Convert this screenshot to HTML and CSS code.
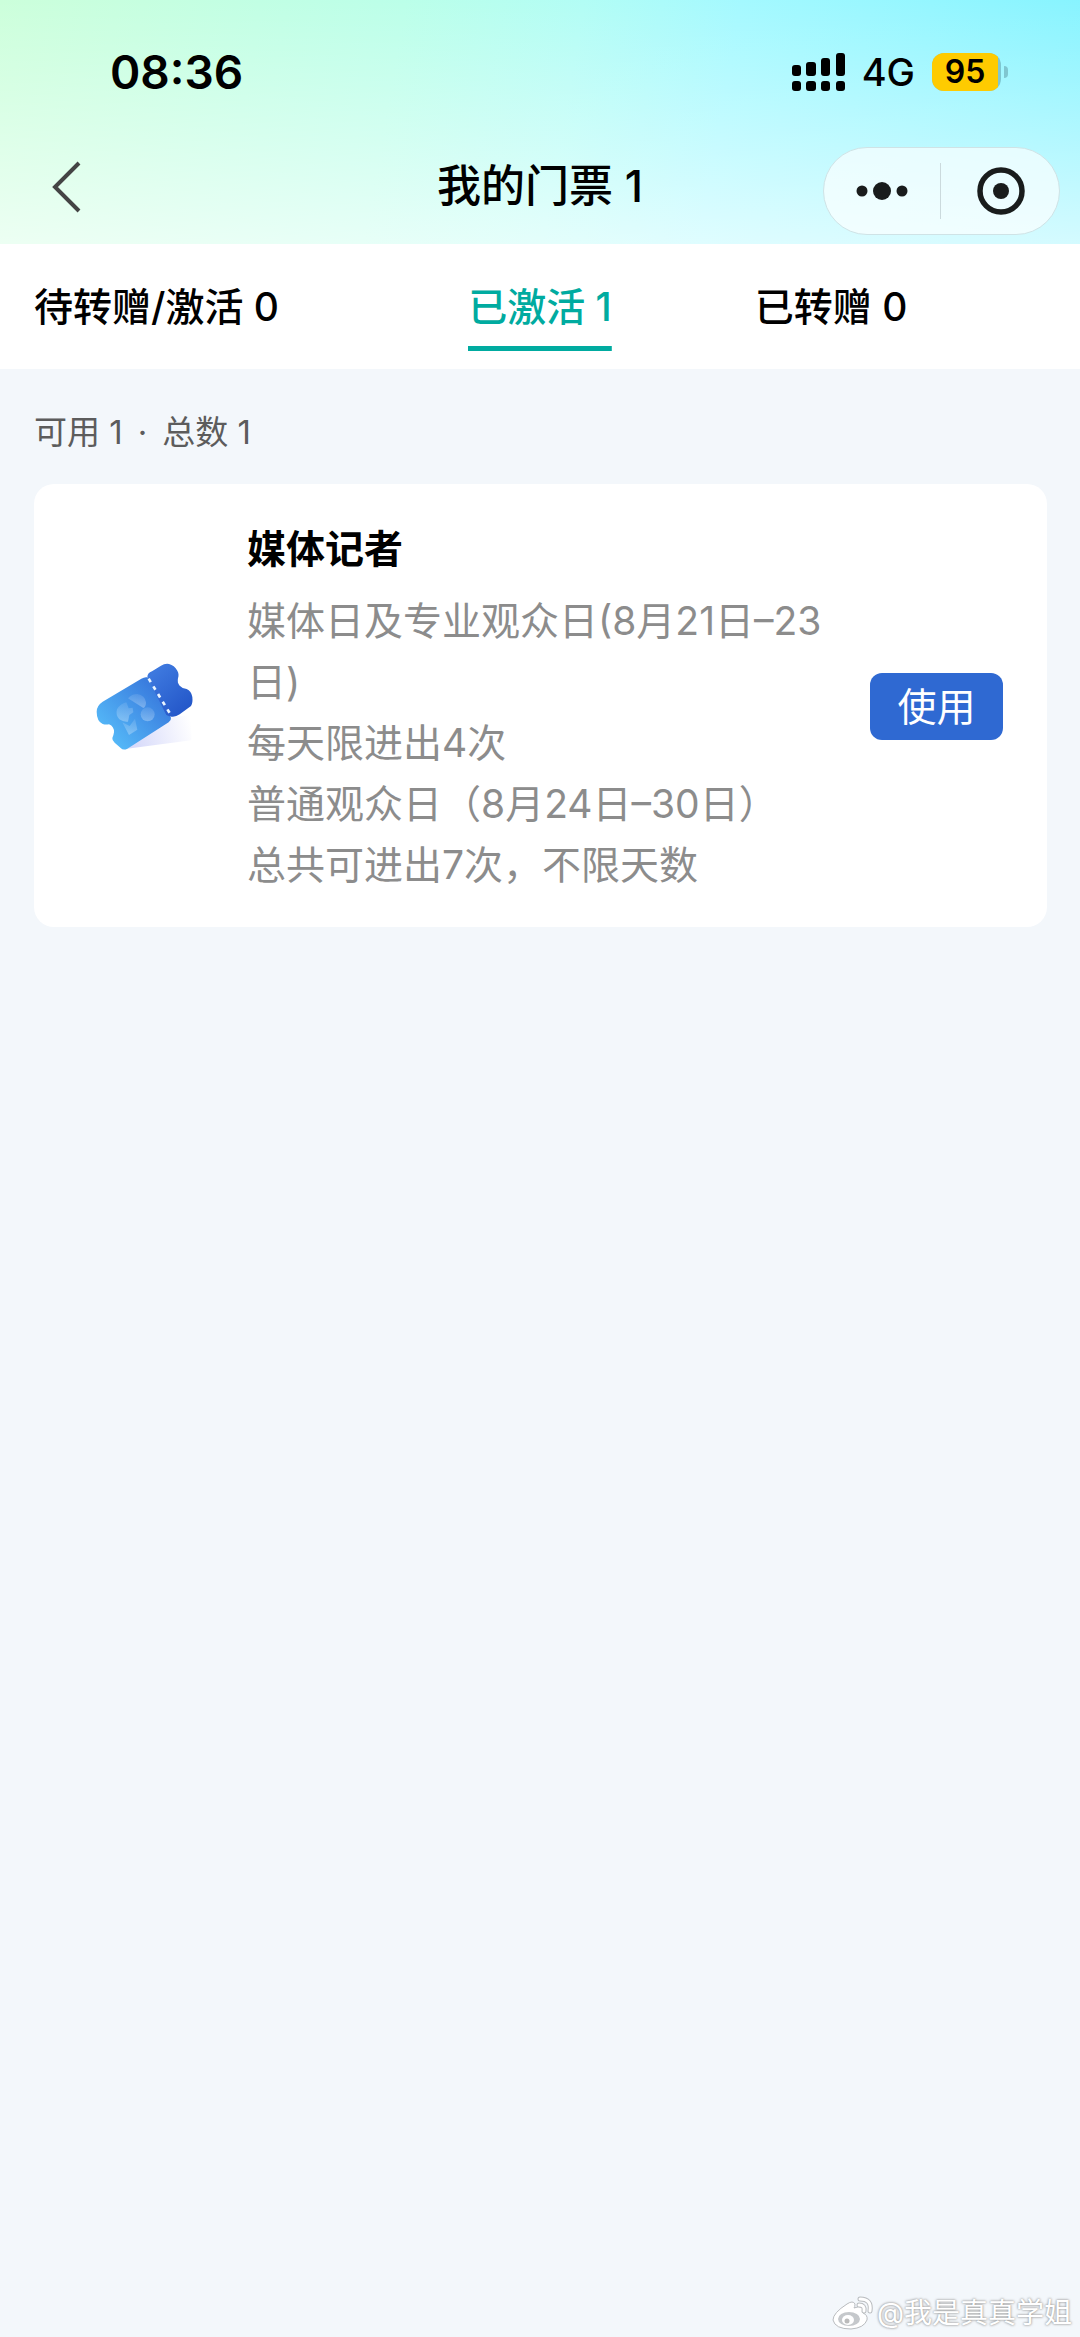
FILE: index.html
```html
<!DOCTYPE html>
<html lang="zh-CN">
<head>
<meta charset="utf-8">
<meta name="viewport" content="width=device-width, initial-scale=1">
<title>我的门票</title>
<link rel="stylesheet" href="styles.css">
</head>
<body>
<header class="header">
  <div class="status">
    <span class="time">08:36</span>
    <div class="status-right">
      <svg class="signal" width="54" height="38" viewBox="0 0 54 38" aria-hidden="true">
        <rect x="0" y="12" width="9" height="11" rx="3"/><rect x="14" y="9" width="10" height="14" rx="3"/><rect x="29" y="5" width="9" height="18" rx="3"/><rect x="44" y="0" width="9" height="23" rx="3"/>
        <rect x="0" y="28" width="9" height="10" rx="3"/><rect x="14" y="28" width="10" height="10" rx="3"/><rect x="29" y="28" width="9" height="10" rx="3"/><rect x="44" y="28" width="9" height="10" rx="3"/>
      </svg>
      <span class="network">4G</span>
      <span class="battery"><span class="level">95</span></span>
      <span class="battery-tip"></span>
    </div>
  </div>
  <div class="nav">
    <button class="back" type="button" aria-label="返回">
      <svg width="30" height="54" viewBox="0 0 30 54" fill="none" stroke="#444" stroke-width="4"><path d="M28 3 4 27l24 24"/></svg>
    </button>
    <h1 class="title">我的门票 1</h1>
    <div class="capsule">
      <button class="capsule-button" type="button" aria-label="更多">
        <svg width="52" height="20" viewBox="0 0 52 20" fill="#191c1c"><circle cx="6" cy="10" r="5.5"/><circle cx="26" cy="10" r="9"/><circle cx="46" cy="10" r="5.5"/></svg>
      </button>
      <button class="capsule-button" type="button" aria-label="关闭">
        <svg width="48" height="48" viewBox="0 0 48 48"><circle cx="24" cy="24" r="21" fill="none" stroke="#191c1c" stroke-width="5.5"/><circle cx="24" cy="24" r="8" fill="#191c1c"/></svg>
      </button>
    </div>
  </div>
</header>
<nav class="tabs">
  <a class="tab" href="#pending">待转赠/激活 0</a>
  <a class="tab active" href="#active" aria-current="page">已激活 1</a>
  <a class="tab last" href="#given">已转赠 0</a>
</nav>
<main class="content">
  <p class="summary"><span>可用 1</span><span>·</span><span>总数 1</span></p>
  <article class="card">
    <svg class="ticket" width="98" height="88" viewBox="108 98 294 264" aria-hidden="true">
      <defs>
        <linearGradient id="body" x1="150" y1="330" x2="310" y2="180" gradientUnits="userSpaceOnUse"><stop offset="0" stop-color="#55b9f8"/><stop offset="1" stop-color="#3777dc"/></linearGradient>
        <linearGradient id="stub" x1="280" y1="130" x2="380" y2="240" gradientUnits="userSpaceOnUse"><stop offset="0" stop-color="#3d78de"/><stop offset="1" stop-color="#2457c9"/></linearGradient>
        <linearGradient id="shade" x1="220" y1="330" x2="395" y2="280" gradientUnits="userSpaceOnUse"><stop offset="0" stop-color="#d7dafa"/><stop offset="1" stop-color="#fff"/></linearGradient>
        <linearGradient id="mark" x1="0" y1="0" x2="0" y2="1"><stop offset="0" stop-color="#fff" stop-opacity=".1"/><stop offset="1" stop-color="#fff" stop-opacity=".3"/></linearGradient>
      </defs>
      <path d="M190 357 338 260l56-6v76Z" fill="url(#shade)"/>
      <path d="M262 141q-8-2-18 4L128 214q-18 12-18 30 0 28 18 37 9 3 19 1 16 7 15 24-1 8-5 17-1 8 7 14l18 16q8 8 20 2l124-79q8-6 7-14Z" fill="url(#body)"/>
      <path d="M262 141q0-13 14-18l27-17q11-7 24-5 16 4 25 20 6 10 2 23-3 14 5 22 7 8 21 10 14 6 17 24 2 18-4 27l-34 25q-12 9-25 7-8-1-15-5Z" fill="url(#stub)"/>
      <path d="M266 145 332 253" fill="none" stroke="#e9f5ff" stroke-width="8" stroke-dasharray="12 15"/>
      <g fill="url(#mark)"><path d="M204 204q11-13 28-13 23 4 26 25 0 14-8 17Z"/><path d="M199 216q-18 4-28 21-5 17 7 30 12 9 26 7l4-20 12-8-2-14-12 2Z"/><circle cx="263" cy="252" r="21"/><path d="m187 276 22 11 16-22 7 33-25 16Z"/></g>
    </svg>
    <div class="info">
      <h2 class="name">媒体记者</h2>
      <p class="desc">媒体日及专业观众日(8月21日–23日)<br>每天限进出4次<br>普通观众日（8月24日–30日）<br>总共可进出7次，不限天数</p>
    </div>
    <button class="use" type="button">使用</button>
  </article>
</main>
<div class="watermark">
  <svg width="42" height="34" viewBox="0 0 42 34" aria-hidden="true">
    <g fill="#fff" stroke="#b9bcbf" stroke-width="1"><path d="M15 8q6-4 8 0 0 3-1 4 5-2 8-1 3 2 1 6 5 2 4 7-3 8-16 9-16 0-18-9 0-7 14-16Z"/></g>
    <ellipse cx="17" cy="23" rx="11" ry="7" fill="#c5c8cb"/><ellipse cx="16" cy="24" rx="6" ry="5" fill="#fff"/><circle cx="15" cy="25" r="2.5" fill="#bbb"/>
    <g fill="none" stroke="#b9bcbf" stroke-width="5" stroke-linecap="round"><path d="M28 3q12 0 10 12M27 9q6 0 5 6"/></g>
    <g fill="none" stroke="#fff" stroke-width="3" stroke-linecap="round"><path d="M28 3q12 0 10 12M27 9q6 0 5 6"/></g>
  </svg>
  <span>@我是真真学姐</span>
</div>
</body>
</html>
```
FILE: styles.css
```css
* { box-sizing: border-box; margin: 0; padding: 0; }
body {
  position: relative;
  min-height: 100vh;
  background: #f3f7fb;
  color: #000;
  font-family: Inter, "Noto Sans CJK SC", sans-serif;
}
button { border: 0; background: none; font: inherit; color: inherit; }
a { color: inherit; text-decoration: none; }
svg { display: block; }

.header {
  background:
    linear-gradient(rgba(255, 255, 255, 0), rgba(255, 255, 255, .65)),
    linear-gradient(100deg, #ccffdb 0%, #bbffe9 36%, #b2fdf5 52%, #a4f9ff 66%, #84f3ff 100%);
}
.status {
  display: flex;
  justify-content: space-between;
  align-items: center;
  height: 144px;
  padding: 0 72px 0 110px;
}
.time { font-size: 46px; font-weight: 600; }
.status-right { display: flex; align-items: center; }
.network { margin: 0 17px 0 16px; font-size: 38px; font-weight: 500; }
.battery {
  width: 69px;
  height: 38px;
  border-radius: 12px;
  overflow: hidden;
  background: #7fc6d0;
}
.level {
  display: block;
  width: 66px;
  background: #fecb00;
  font-size: 32px;
  font-weight: 600;
  line-height: 38px;
  text-align: center;
}
.battery-tip { width: 4px; height: 12px; margin-left: 3px; border-radius: 0 4px 4px 0; background: #7fc6d0; }

.nav {
  display: grid;
  grid-template-columns: 1fr auto 1fr;
  align-items: start;
  height: 100px;
  padding: 3px 20px 0;
}
.back { justify-self: start; margin: 13px 0 0 31px; }
.title { margin-top: 9px; font-size: 44px; font-weight: 500; line-height: 60px; }
.capsule {
  display: flex;
  justify-self: end;
  width: 237px;
  height: 88px;
  border: 1px solid #cfe3e6;
  border-radius: 44px;
  background: rgba(255, 255, 255, .65);
}
.capsule-button { display: flex; flex: 1; align-items: center; justify-content: center; }
.capsule-button + .capsule-button {
  padding-left: 3px;
  background: linear-gradient(#cbdadd, #cbdadd) left center / 1px 56px no-repeat;
}

.tabs {
  display: grid;
  grid-template-columns: 1fr auto 1fr;
  padding: 0 34px 18px;
  background: #fff;
  font-size: 39px;
  font-weight: 500;
  line-height: 60px;
}
.tab { justify-self: start; height: 107px; padding-top: 33px; }
.tab.active {
  color: #00aba0;
  background: linear-gradient(#00aba0, #00aba0) bottom / 100% 5px no-repeat;
}
.tab.last { margin-left: 143px; }

.content { padding: 0 33px 0 34px; }
.summary { display: flex; gap: 15px; padding: 39px 0 28px; color: #5c5c5c; font-size: 33px; line-height: 48px; }
.card {
  display: flex;
  align-items: center;
  padding: 34px 44px 32px 62px;
  border-radius: 20px;
  background: #fff;
}
.ticket { flex: none; }
.info { flex: 1; margin: 0 35px 0 53px; }
.name { margin-bottom: 11px; font-size: 39px; font-weight: 700; line-height: 61px; }
.desc { color: #8c8c8c; font-size: 39px; line-height: 61px; }
.use {
  flex: none;
  width: 133px;
  height: 67px;
  border-radius: 12px;
  background: #2f69d2;
  color: #fff;
  font-size: 39px;
  line-height: 67px;
}

.watermark {
  position: absolute;
  right: 8px;
  bottom: 4px;
  display: flex;
  align-items: center;
  gap: 3px;
  color: #fff;
  font-size: 28px;
  line-height: 40px;
  text-shadow: 0 0 2px #999, 0 0 3px #aaa;
}
```
